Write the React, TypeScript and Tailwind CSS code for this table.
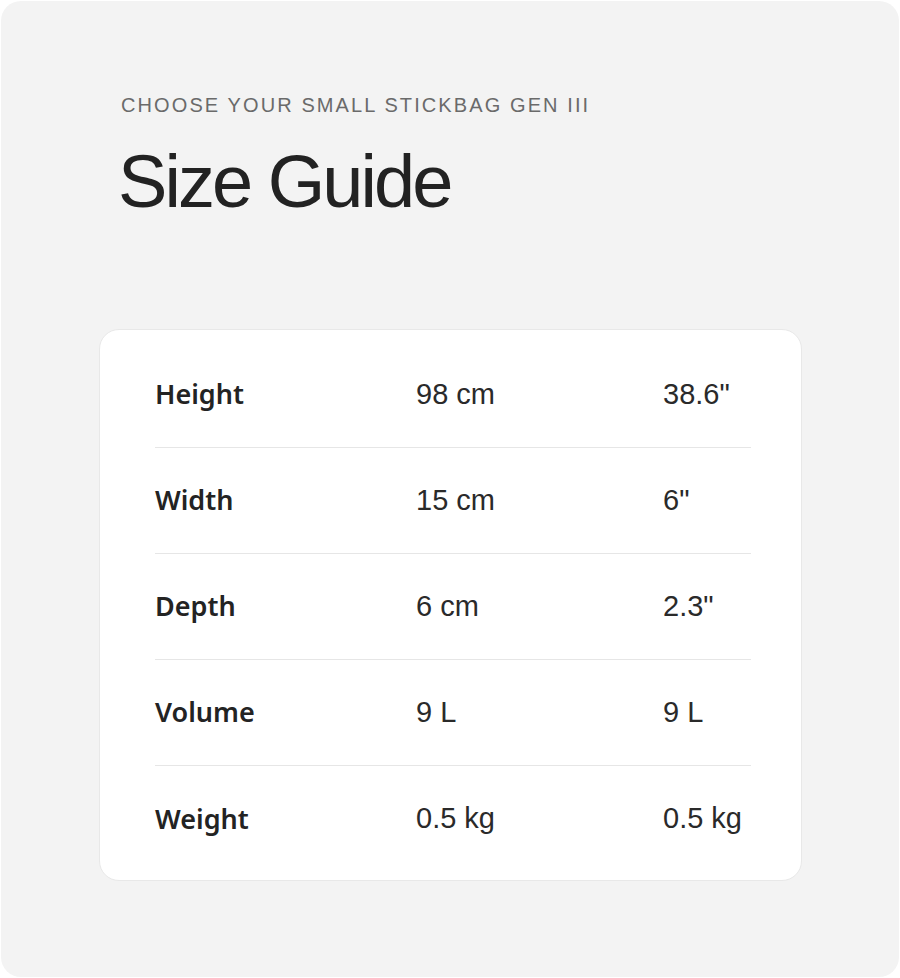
import React from 'react';

const rows = [
  { label: 'Height', metric: '98 cm', imperial: '38.6"' },
  { label: 'Width', metric: '15 cm', imperial: '6"' },
  { label: 'Depth', metric: '6 cm', imperial: '2.3"' },
  { label: 'Volume', metric: '9 L', imperial: '9 L' },
  { label: 'Weight', metric: '0.5 kg', imperial: '0.5 kg' },
];

function SizeRow({ row, last }: { row: (typeof rows)[number]; last: boolean }) {
  return (
    <div
      className={`grid h-[106px] grid-cols-[261px_247px_1fr] items-center ${
        last ? '' : 'border-b border-[#e6e6e6]'
      }`}
    >
      <p className="font-['Noto_Sans',sans-serif] text-[27px] font-semibold text-[#232323]">
        {row.label}
      </p>
      <p className="text-[29px] text-[#2a2a2a]">{row.metric}</p>
      <p className="text-[29px] text-[#2a2a2a]">{row.imperial}</p>
    </div>
  );
}

export default function App() {
  return (
    <div className="h-[978px] w-[900px] bg-white p-px font-['Liberation_Sans',Arial,sans-serif]">
      <div className="h-full rounded-[20px] bg-[#f3f3f3] pt-[92px]">
        <div className="pl-[120px]">
          <p className="text-[20px] leading-[24px] tracking-[0.105em] text-[#6a6a6a]">
            CHOOSE YOUR SMALL STICKBAG GEN III
          </p>
          <h1 className="-ml-[3px] mt-[28px] text-[74px] leading-[74px] tracking-[-0.04em] text-[#222]">
            Size Guide
          </h1>
        </div>
        <div className="ml-[98px] mt-[110px] w-[703px] rounded-[20px] border border-[#e8e8e8] bg-white pt-[12px] pr-[50px] pb-[8px] pl-[55px]">
          {rows.map((row, i) => (
            <SizeRow key={row.label} row={row} last={i === rows.length - 1} />
          ))}
        </div>
      </div>
    </div>
  );
}
